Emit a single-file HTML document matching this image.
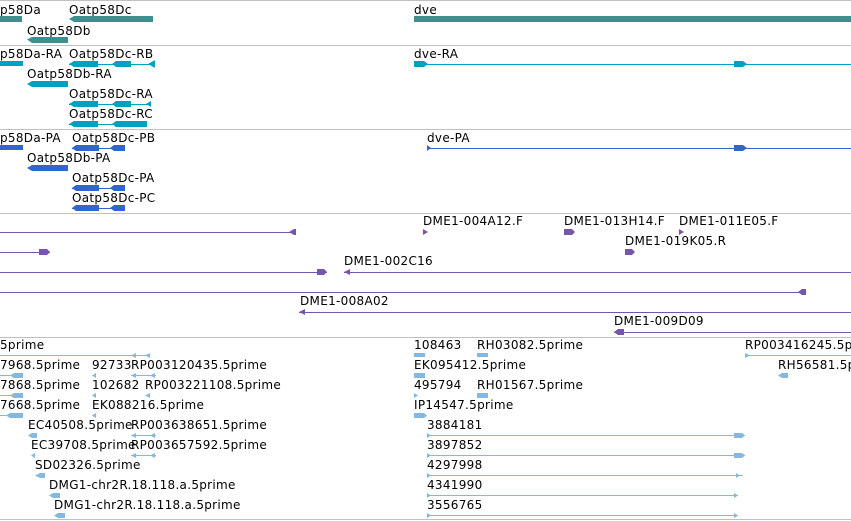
<!DOCTYPE html>
<html><head><meta charset="utf-8"><style>
html,body{margin:0;padding:0;background:#fff;width:851px;height:521px;overflow:hidden}
svg text{font-family:"DejaVu Sans","Liberation Sans",sans-serif;font-size:12px;fill:#000;letter-spacing:0.3px}
svg rect{shape-rendering:crispEdges}
</style></head><body>
<svg width="851" height="521" xmlns="http://www.w3.org/2000/svg">
<g fill="#c0c0c0">
<rect x="0" y="0" width="851" height="1"/>
<rect x="0" y="45" width="851" height="1"/>
<rect x="0" y="129" width="851" height="1"/>
<rect x="0" y="213" width="851" height="1"/>
<rect x="0" y="337" width="851" height="1"/>
<rect x="0" y="519" width="851" height="1"/>
</g>

<text x="0" y="14">p58Da</text>
<text x="69" y="14">Oatp58Dc</text>
<text x="414" y="14">dve</text>
<text x="27" y="35">Oatp58Db</text>
<g fill="#3f8f91">
<rect x="0" y="16" width="22" height="6"/>
<polygon points="69,19 74,16 153,16 153,22 74,22"/>
<rect x="414" y="16" width="437" height="6"/>
<polygon points="27,39.5 32,37 68,37 68,43 32,43"/>
</g>

<text x="0" y="58">p58Da-RA</text>
<text x="69" y="58">Oatp58Dc-RB</text>
<text x="414" y="58">dve-RA</text>
<text x="27" y="78">Oatp58Db-RA</text>
<text x="69" y="98">Oatp58Dc-RA</text>
<text x="69" y="118">Oatp58Dc-RC</text>
<g fill="#00a0c0">
<rect x="0" y="61" width="23" height="5"/>
<rect x="69" y="64" width="86" height="1"/><polygon points="69,64 74,61 98,61 98,67 74,67"/><polygon points="112,64 116,61 131,61 131,67 116,67"/><polygon points="148,64 155,60 155,68"/>
<rect x="414" y="64" width="437" height="1"/><polygon points="414,61 424,61 428,64 424,67 414,67"/><polygon points="734,61 743,61 747,64 743,67 734,67"/>
<polygon points="27,84 32,81 68,81 68,87 32,87"/>
<rect x="69" y="104" width="82" height="1"/><polygon points="69,104 74,101 98,101 98,107 74,107"/><polygon points="112,104 116,101 131,101 131,107 116,107"/><polygon points="146,104 151,101 151,107"/>
<rect x="69" y="124" width="78" height="1"/><polygon points="69,124 74,121 98,121 98,127 74,127"/><polygon points="112,124 116,121 147,121 147,127 116,127"/>
</g>

<text x="0" y="142">p58Da-PA</text>
<text x="72" y="142">Oatp58Dc-PB</text>
<text x="427" y="142">dve-PA</text>
<text x="27" y="162">Oatp58Db-PA</text>
<text x="72" y="182">Oatp58Dc-PA</text>
<text x="72" y="202">Oatp58Dc-PC</text>
<g fill="#3366cc">
<rect x="0" y="145" width="23" height="5"/>
<rect x="72" y="148" width="53" height="1"/><polygon points="72,148 76,145 99,145 99,151 76,151"/><polygon points="110,148 114,145 125,145 125,151 114,151"/>
<rect x="427" y="148" width="424" height="1"/><polygon points="427,145 431,148 427,151"/><polygon points="734,145 743,145 747,148 743,151 734,151"/>
<polygon points="27,168 32,165 68,165 68,171 32,171"/>
<rect x="72" y="188" width="53" height="1"/><polygon points="72,188 76,185 99,185 99,191 76,191"/><polygon points="110,188 114,185 125,185 125,191 114,191"/>
<rect x="72" y="208" width="53" height="1"/><polygon points="72,208 76,205 99,205 99,211 76,211"/><polygon points="110,208 114,205 125,205 125,211 114,211"/>
</g>

<text x="423" y="225">DME1-004A12.F</text>
<text x="564" y="225">DME1-013H14.F</text>
<text x="679" y="225">DME1-011E05.F</text>
<text x="625" y="245">DME1-019K05.R</text>
<text x="344" y="265">DME1-002C16</text>
<text x="300" y="305">DME1-008A02</text>
<text x="614" y="325">DME1-009D09</text>
<g fill="#7755aa">
<rect x="0" y="232" width="296" height="1"/><polygon points="289,232 294,229 296,229 296,235 294,235"/>
<polygon points="423,229 428,232 423,235"/><polygon points="564,229 572,229 575,232 572,235 564,235"/><polygon points="679,229 684,232 679,235"/>
<rect x="0" y="252" width="50" height="1"/><polygon points="39,249 47,249 50,252 47,255 39,255"/>
<polygon points="625,249 632,249 635,252 632,255 625,255"/>
<rect x="0" y="272" width="327" height="1"/><polygon points="317,269 324,269 327,272 324,275 317,275"/>
<rect x="344" y="272" width="507" height="1"/><polygon points="344,272 350,269 350,275"/>
<rect x="0" y="292" width="806" height="1"/><polygon points="798,292 802,289 806,289 806,295 802,295"/>
<rect x="299" y="312" width="552" height="1"/><polygon points="299,312 305,309 305,315"/>
<rect x="614" y="332" width="237" height="1"/><polygon points="614,332 618,329 624,329 624,335 618,335"/>
</g>

<text x="0" y="349">5prime</text>
<text x="414" y="349">108463</text>
<text x="477" y="349">RH03082.5prime</text>
<text x="745" y="349">RP003416245.5prime</text>
<text x="0" y="369">7968.5prime</text>
<text x="92" y="369">92733</text>
<text x="131" y="369">RP003120435.5prime</text>
<text x="414" y="369">EK095412.5prime</text>
<text x="778" y="369">RH56581.5prime</text>
<text x="0" y="389">7868.5prime</text>
<text x="92" y="389">102682</text>
<text x="145" y="389">RP003221108.5prime</text>
<text x="414" y="389">495794</text>
<text x="477" y="389">RH01567.5prime</text>
<text x="0" y="409">7668.5prime</text>
<text x="92" y="409">EK088216.5prime</text>
<text x="414" y="409">IP14547.5prime</text>
<text x="28" y="429">EC40508.5prime</text>
<text x="131" y="429">RP003638651.5prime</text>
<text x="427" y="429">3884181</text>
<text x="31" y="449">EC39708.5prime</text>
<text x="131" y="449">RP003657592.5prime</text>
<text x="427" y="449">3897852</text>
<text x="35" y="469">SD02326.5prime</text>
<text x="427" y="469">4297998</text>
<text x="49" y="489">DMG1-chr2R.18.118.a.5prime</text>
<text x="427" y="489">4341990</text>
<text x="54" y="509">DMG1-chr2R.18.118.a.5prime</text>
<text x="427" y="509">3556765</text>
<g fill="#85b8de">
<rect x="0" y="355" width="150" height="1"/><polygon points="131,355.5 136,353 136,358"/><polygon points="145,355.5 150,353 150,358"/>
<rect x="414" y="353" width="11" height="4"/><rect x="477" y="353" width="11" height="4"/>
<rect x="745" y="355" width="106" height="1"/><polygon points="745,353 750,355.5 745,358"/>
<rect x="0" y="375" width="23" height="1"/><polygon points="10,375.5 14,373 23,373 23,378 14,378"/>
<polygon points="92,375.5 96,373 96,378"/><rect x="131" y="375" width="25" height="1"/><polygon points="131,375.5 136,373 136,378"/><polygon points="150,375.5 155,373 155,378"/>
<rect x="414" y="373" width="11" height="5"/><polygon points="778,375.5 782,373 788,373 788,378 782,378"/>
<rect x="0" y="395" width="23" height="1"/><polygon points="10,395.5 14,393 23,393 23,398 14,398"/>
<polygon points="92,395.5 96,393 96,398"/><polygon points="145,395.5 150,393 150,398"/>
<polygon points="414,393 418,395.5 414,398"/><rect x="477" y="393" width="11" height="5"/>
<rect x="0" y="415" width="23" height="1"/><polygon points="6,415.5 10,413 23,413 23,418 10,418"/>
<polygon points="92,415.5 96,413 96,418"/><polygon points="414,413 424,413 427,415.5 424,418 414,418"/>
<polygon points="28,435.5 32,433 37,433 37,438 32,438"/><rect x="131" y="435" width="25" height="1"/><polygon points="131,435.5 136,433 136,438"/><polygon points="150,435.5 155,433 155,438"/>
<rect x="427" y="435" width="318" height="1"/><polygon points="427,433 431,435.5 427,438"/><polygon points="734,433 742,433 745,435.5 742,438 734,438"/>
<polygon points="31,455.5 35,453 35,458"/><rect x="131" y="455" width="25" height="1"/><polygon points="131,455.5 136,453 136,458"/><polygon points="150,455.5 155,453 155,458"/>
<rect x="427" y="455" width="318" height="1"/><polygon points="427,453 431,455.5 427,458"/><polygon points="734,453 742,453 745,455.5 742,458 734,458"/>
<polygon points="35,475.5 40,473 45,473 45,478 40,478"/>
<rect x="427" y="475" width="316" height="1"/><polygon points="427,473 431,475.5 427,478"/><polygon points="736,473 740,475.5 736,478"/>
<polygon points="49,495.5 53,493 60,493 60,498 53,498"/>
<rect x="427" y="495" width="311" height="1"/><polygon points="427,493 431,495.5 427,498"/><polygon points="734,493 738,495.5 734,498"/>
<polygon points="54,515.5 58,513 65,513 65,518 58,518"/>
<rect x="427" y="515" width="311" height="1"/><polygon points="427,513 431,515.5 427,518"/><polygon points="734,513 738,515.5 734,518"/>
</g>
</svg>
</body></html>
